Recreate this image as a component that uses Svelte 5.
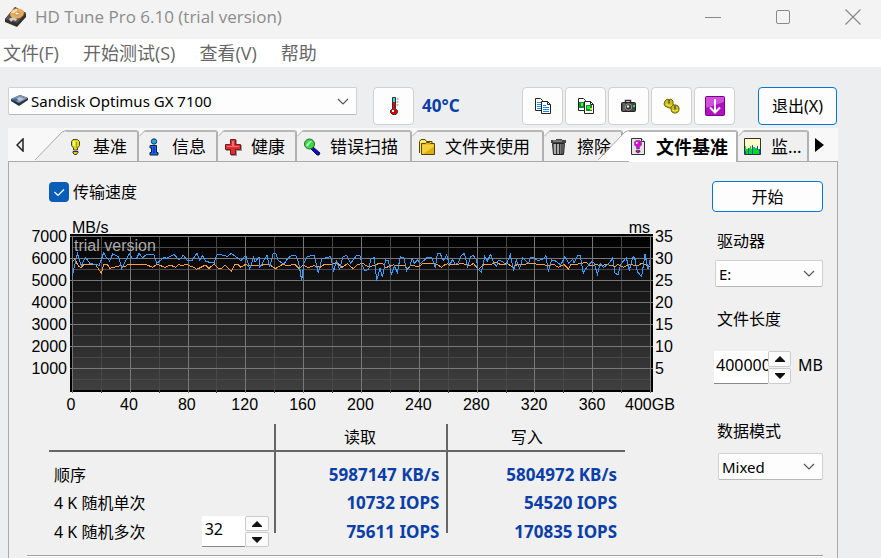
<script>
  const menus = ['文件(F)', '开始测试(S)', '查看(V)', '帮助'];
  const tools = ['copy', 'copyImage', 'camera', 'options', 'save'];
  const toolNames = {
    copy: '复制文本', copyImage: '复制图像', camera: '截图', options: '选项', save: '保存'
  };
  const tabs = [
    { label: '基准', icon: 'bulb', slope: true },
    { label: '信息', icon: 'info' },
    { label: '健康', icon: 'health' },
    { label: '错误扫描', icon: 'scan', wide: true },
    { label: '文件夹使用', icon: 'folder', wide: true },
    { label: '擦除', icon: 'trash' },
    { label: '文件基准', icon: 'fileBulb', slope: true, active: true },
    { label: '监...', icon: 'monitor', cut: true }
  ];
  const speeds = [7000, 6000, 5000, 4000, 3000, 2000, 1000];
  const times = [35, 30, 25, 20, 15, 10, 5];
  const sizes = ['0', '40', '80', '120', '160', '200', '240', '280', '320', '360', '400GB'];
  const rows = [
    { label: '顺序', read: '5987147 KB/s', write: '5804972 KB/s' },
    { label: '4 K 随机单次', read: '10732 IOPS', write: '54520 IOPS' },
    { label: '4 K 随机多次', read: '75611 IOPS', write: '170835 IOPS', threads: true }
  ];

  // grid lines, in plot pixels
  const xs = Array.from({ length: 21 }, (_, i) => ({ at: Math.floor(2.4 + i * 28.91) + 0.5, major: i % 2 === 0 }));
  const ys = Array.from({ length: 14 }, (_, i) => ({ at: 2.5 + i * 11, major: i % 2 === 0 }));

  // samples in thirds of a plot pixel
  const readLine =
    '7,125 22,58 34,96 46,70 52,78 60,88 88,94 101,56 107,68 119,81 128,60 146,68 155,103 178,59 187,73 200,73 207,58 218,71 231,60 252,62 260,88 282,71 291,73 312,61 327,78 340,64 353,81 365,81 381,57 389,78 398,65 407,83 432,86 442,60 472,67 484,58 513,80 527,64 539,105 551,70 555,85 567,69 570,100 591,63 599,100 609,60 617,58 625,80 642,90 655,71 667,64 679,66 685,83 689,103 695,139 702,88 712,68 732,63 745,117 755,75 782,68 791,113 799,80 809,106 818,70 830,63 842,88 ' +
    '860,64 870,65 876,93 885,110 896,106 903,75 913,71 920,140 930,103 937,130 947,78 955,80 964,121 973,96 982,115 991,68 1002,72 1010,110 1019,100 1026,71 1033,88 1043,78 1051,89 1072,70 1086,72 1096,103 1102,60 1110,58 1120,80 1130,63 1139,93 1148,76 1155,91 1165,86 1173,65 1183,58 1193,98 1201,68 1210,65 1220,78 1224,106 1234,115 1244,68 1252,81 1262,61 1272,88 1280,96 1285,78 1298,83 1308,93 1321,62 1331,110 1339,78 1349,103 1358,72 1376,88 1382,70 1392,72 1405,80 1423,73 1428,65 1435,113 1445,78 1457,81 1472,93 1485,68 1496,88 1508,76 1512,88 1523,64 1531,65 1540,118 1550,100 1565,83 1573,88 1582,121 1591,88 1600,100 1615,91 1628,72 1635,118 1644,122 1652,91 1669,71 1678,108 1689,68 1694,71 1702,113 1715,128 1725,61 1734,106 1740,78';
  const writeLine =
    '7,83 14,75 25,96 33,101 43,91 52,93 76,91 94,118 101,91 112,91 119,103 150,95 165,98 174,91 227,91 248,100 260,91 286,100 300,93 317,100 327,91 335,95 350,91 362,97 371,100 380,106 407,93 417,103 433,90 442,101 452,105 465,93 484,112 494,91 503,91 512,100 527,91 537,96 550,94 570,95 585,91 600,93 616,104 638,91 652,95 675,91 687,103 700,93 716,101 732,95 750,100 764,91 780,91 803,88 816,100 832,89 ' +
    '850,104 860,93 878,88 895,99 915,93 928,88 938,88 947,101 970,93 1005,95 1012,106 1022,93 1045,98 1060,88 1080,88 1100,91 1115,100 1123,93 1132,90 1165,91 1175,88 1200,95 1210,88 1218,98 1225,106 1240,93 1265,91 1278,85 1295,93 1310,88 1330,100 1340,93 1360,93 1375,88 1420,92 1433,95 1450,90 1465,100 1482,91 1495,105 1503,91 1520,91 1548,85 1558,93 1565,96 1580,90 1590,96 1610,91 1635,98 1643,91 1660,100 1678,91 1702,96 1715,88 1740,98';

  let showSpeed = $state(true);
  let length = $state('400000');
  let threads = $state(32);
</script>

{#snippet chevron()}
  <svg class="chev" width="12" height="7" viewBox="0 0 12 7" aria-hidden="true"><path d="M1 1l5 5 5-5" fill="none" stroke="#555" stroke-width="1.200" /></svg>
{/snippet}

{#snippet spin(up, down)}
  <span class="spin">
    <button type="button" aria-label="增加" onclick={up}><svg width="10" height="6" viewBox="0 0 10 6"><path d="M5 0l5 5v1H0V5z" fill="#111" /></svg></button>
    <button type="button" aria-label="减少" onclick={down}><svg width="10" height="6" viewBox="0 0 10 6"><path d="M5 6l5-5V0H0v1z" fill="#111" /></svg></button>
  </span>
{/snippet}

{#snippet icon(name)}
  <svg class="icon" width="18" height="18" viewBox="0 0 18 18" aria-hidden="true">
    {#if name === 'bulb'}
      <path d="M7 1.500h4.500l2 2v4l-2 2.500v2h-4V10L5.500 7.500v-4z" fill="#e2dc00" stroke="#444" />
      <path d="M7 3.500h2v4H7z" fill="#ffffa8" /><path d="M10.500 4v6" stroke="#a89c00" />
      <path d="M7 13.500h5v1.500l-1.500 1.500h-2L7 15z" fill="#d8d000" stroke="#333" /><path d="M10 15h2v1h-2z" fill="#d060c0" />
    {:else if name === 'info'}
      <circle cx="9" cy="3.500" r="2.700" fill="#18a8f0" stroke="#234" />
      <path d="M5 7.500h6.500v7H13V17H5v-2.500h1.500V10H5z" fill="#1468f0" stroke="#123" />
      <path d="M8 9h2v6H8z" fill="#1838e8" />
    {:else if name === 'health'}
      <path d="M7 2h6v5h5v6h-5v5H7v-5H2V7h5z" fill="#999" />
      <path d="M6.500 1.500h5v5h5v5h-5v5h-5v-5h-5v-5h5z" fill="#e02c2c" stroke="#6e2020" />
      <path d="M8 3h2v5h5v1H3V8h5z" fill="#f47070" />
    {:else if name === 'scan'}
      <path d="M10 9l7 6-1 2-2 0-6-6z" fill="#1010c0" stroke="#111150" />
      <circle cx="6.500" cy="6" r="5" fill="#38d848" stroke="#256a30" />
      <path d="M3 7l4-4h2L4 9z" fill="#b8ffc0" />
    {:else if name === 'folder'}
      <path d="M1.500 15V3.500l1.500-2h4l1.500 2H14V6" fill="#ffe968" stroke="#554500" />
      <path d="M3.500 16.500v-11h4l1-1h3l1 1h4v11z" fill="#e0ae10" stroke="#554500" />
      <path d="M4 6.500h12v2L5 16H4z" fill="#f4d040" />
    {:else if name === 'trash'}
      <path d="M1 2h5V1h6v1h4v3H1z" fill="#444" />
      <path d="M2.500 5.500h12l-1 11h-10z" fill="#777" stroke="#222" />
      <path d="M5 6v10M8 6v10" stroke="#ddd" /><path d="M6.500 6v10M9.500 6v10M12 6v10" stroke="#333" />
      <path d="M3 3h9" stroke="#aaa" />
    {:else if name === 'fileBulb'}
      <path d="M2.500.500h10l3 3v13h-13z" fill="#e4e4e4" stroke="#333" /><path d="M12.500.500v3h3" fill="#fff" stroke="#333" />
      <path d="M7 2.500h4L12.500 4v3L10.500 9v2h-3V9L5.500 7V4z" fill="#e000e0" stroke="#666" stroke-width=".7" />
      <path d="M7 4h1.500v2H7z" fill="#fff" /><path d="M7 12.500h4v1L9.500 15h-1L7 13.500z" fill="#c000c0" stroke="#333" stroke-width=".6" />
    {:else if name === 'monitor'}
      <path d="M.5.500h16v16H.5z" fill="#fffbc8" stroke="#333" />
      <path d="M1 16V8h1v3h2v-1h2V8h1v3h1V7h1v2h2v1h2V8h1v3h2v5z" fill="#00dc10" />
      <path d="M1 13h1v3H1zM4 10h1v6H4zM8 7h1v9H8zM13 8h1v4h-1zM15 11h1v5h-1z" fill="#1848e8" />
    {:else if name === 'thermo'}
      <path d="M7.500 12V.500h3V12l2 1.500v2L11 17.500H7.500l-2-2v-2z" fill="#e00000" stroke="#333" />
      <path d="M8 1h2v4H8z" fill="#30d8e0" /><path d="M7 13h2v2H7z" fill="#fff" /><path d="M11.500 2h2M11.500 5h2M11.500 8h2" stroke="#777" />
    {:else if name === 'copy'}
      <path d="M1.500 1.500h5l2 2v10h-7z" fill="#fff" stroke="#222" />
      <path d="M3 5.500h4M3 7.500h4M3 9.500h4M3 11.500h4" stroke="#1890f0" />
      <path d="M7.500 4.500h6l3 3v9h-9z" fill="#fff" stroke="#222" /><path d="M13.500 4.500v3h3" fill="none" stroke="#222" />
      <path d="M9 8.500h3M9 10.500h6M9 12.500h6M9 14.500h6" stroke="#1880f0" />
    {:else if name === 'copyImage'}
      <path d="M1.500 1.500h5l2 2v10h-7z" fill="#fff" stroke="#222" /><path d="M2 5h6v6H2z" fill="#148c30" /><path d="M4 6h2v3H4z" fill="#40ff40" />
      <path d="M7.500 4.500h6l3 3v9h-9z" fill="#fff" stroke="#222" /><path d="M13.500 4.500v3h3" fill="none" stroke="#222" />
      <path d="M9 8h6v6H9z" fill="#148c30" /><path d="M10 9h3v3h-3z" fill="#30f030" /><path d="M13 11h2v2h-2z" fill="#e0e020" />
    {:else if name === 'camera'}
      <path d="M5.500 6V3.500h5V6" fill="none" stroke="#333" stroke-width="1.500" />
      <rect x="1.500" y="5.500" width="14" height="9" rx="1" fill="#444" stroke="#222" />
      <circle cx="8.500" cy="10" r="3.200" fill="#333" stroke="#999" /><circle cx="8" cy="9.500" r="1.200" fill="#eee" />
      <path d="M13 8h2v2h-2z" fill="#20e040" /><path d="M4 6v8" stroke="#888" />
    {:else if name === 'options'}
      <path d="M2 4l2-2 2 1 2-1 2 2v3l1 2-2 2H6L4 10 2 9 1 7z" fill="#cabe14" stroke="#6e6400" />
      <path d="M8 10l2-2h3l2 1 1 2v2l-1 2-2 1h-2l-2-1-1-2z" fill="#cabe14" stroke="#6e6400" />
      <path d="M3 7l4 2 2-1M9 13l3 1 3-1" fill="none" stroke="#f2e858" /><path d="M6 2.500v4M12 8.500v4" stroke="#555" stroke-width="1.500" />
    {/if}
  </svg>
{/snippet}

<div class="app">
  <header class="title">
    <svg width="23" height="20" viewBox="0 0 23 20" aria-hidden="true">
      <path d="M1 12L11 0l11 6v4l-9 10L1 15z" fill="#33302e" />
      <path d="M1 12L11 0l11 6-9 10z" fill="#5b5552" />
      <ellipse cx="13" cy="6.500" rx="7" ry="5" fill="#e8ac58" transform="rotate(-12 13 6.500)" />
      <path d="M7 6q2-4 6-4l0 4z" fill="#ffdc98" />
      <ellipse cx="13" cy="6.500" rx="2.200" ry="1.500" fill="#eee" stroke="#8a6a40" stroke-width=".6" />
      <path d="M5 12l4-2 4 2-1 2-3-1-2 2z" fill="#ccc" />
    </svg>
    <h1>HD Tune Pro 6.10 (trial version)</h1>
    <div class="window-buttons">
      <button type="button" aria-label="最小化"><svg width="16" height="16" viewBox="0 0 16 16"><path d="M0 8.500h16" stroke="#888" /></svg></button>
      <button type="button" aria-label="最大化"><svg width="16" height="16" viewBox="0 0 16 16"><rect x="1.500" y="1.500" width="13" height="13" rx="1.500" fill="none" stroke="#888" /></svg></button>
      <button type="button" aria-label="关闭"><svg width="16" height="16" viewBox="0 0 16 16"><path d="M.5.500l15 15M15.500.500l-15 15" stroke="#888" stroke-width="1.200" /></svg></button>
    </div>
  </header>

  <nav class="menu">
    {#each menus as m}<button type="button">{m}</button>{/each}
  </nav>

  <div class="toolbar">
    <div class="combo drive">
      <svg class="disk" width="17" height="12" viewBox="0 0 17 12" aria-hidden="true">
        <path d="M0 4L9 0l8 3v2L8 11 0 6z" fill="#26323e" /><path d="M0 4L9 0l8 3-9 5z" fill="#8094a8" /><path d="M5 4l4-2 4 2-4 2z" fill="#b4c8dc" /><path d="M1 5l4-2 2 2-2 1z" fill="#2c66b8" />
      </svg>
      <select aria-label="磁盘"><option>Sandisk Optimus GX 7100</option></select>
      {@render chevron()}
    </div>
    <button type="button" class="tool temp" aria-label="温度">{@render icon('thermo')}</button>
    <span class="degrees">40°C</span>
    <div class="tools">
      {#each tools as t}
        <button type="button" class="tool" aria-label={toolNames[t]}>
          {#if t === 'save'}
            <svg width="20" height="20" viewBox="0 0 20 20" aria-hidden="true"><rect x=".5" y=".5" width="19" height="19" rx="1" fill="#b010c0" stroke="#780088" /><path d="M1 1h18v5L1 12z" fill="#d050dc" /><path d="M10 3v13M5 11.500l5 5 5-5" fill="none" stroke="#fff" stroke-width="2" /></svg>
          {:else}{@render icon(t)}{/if}
        </button>
      {/each}
    </div>
    <button type="button" class="exit">退出(X)</button>
  </div>

  <div class="tabs" role="tablist">
    <button type="button" class="scroll" aria-label="向左"><svg width="8" height="14" viewBox="0 0 8 14"><path d="M7 1v12L1 7z" fill="#eee" stroke="#222" stroke-width="1.500" /></svg></button>
    {#each tabs as t}
      <button type="button" role="tab" aria-selected={!!t.active} class="tab" class:active={t.active} class:sloped={t.slope} class:wide={t.wide} class:cut={t.cut}>
        {#if t.slope}
          <svg class="slope" width="31" height="33" viewBox="0 0 31 33" aria-hidden="true"><path d="M0 33L28 3l3-1v31z" fill={t.active ? '#fff' : '#f0f0f0'} /><path d="M0 32L27 4l4-1.500" fill="none" stroke="#aaa" /></svg>
        {/if}
        <span class="face">
          {#if !t.slope}<svg class="corner" width="7" height="7" viewBox="0 0 7 7" aria-hidden="true"><path d="M0 0h7L0 7z" fill="#f8f8f8" /><path d="M0 6.500L6.500 0" stroke="#aaa" /></svg>{/if}
          {@render icon(t.icon)}<span>{t.label}</span>
        </span>
      </button>
    {/each}
    <button type="button" class="scroll" aria-label="向右"><svg width="9" height="14" viewBox="0 0 9 14"><path d="M0 0v14l9-7z" fill="#000" /></svg></button>
  </div>

  <main class="panel">
    <div class="columns">
      <section class="results">
        <label class="check">
          <input type="checkbox" bind:checked={showSpeed} />
          <svg width="20" height="20" viewBox="0 0 20 20" aria-hidden="true"><rect width="20" height="20" rx="4" fill="#0a5eb8" /><path d="M5.500 10l3.500 3.500 6-6" fill="none" stroke="#fff" stroke-width="1.200" /></svg>
          <span>传输速度</span>
        </label>

        <div class="chart">
          <div class="axis left">{#each speeds as s}<span>{s}</span>{/each}</div>
          <div class="middle">
            <div class="units"><span>MB/s</span><span>ms</span></div>
            <div class="plot">
              <svg viewBox="0 0 583 159" preserveAspectRatio="none" aria-hidden="true">
                <defs><linearGradient id="fade" x1="0" y1="0" x2="0" y2="1"><stop offset="0" stop-color="#000" /><stop offset="1" stop-color="#404040" /></linearGradient></defs>
                <rect width="583" height="158" fill="#000" />
                <rect x="2" y="2" width="579" height="154" fill="url(#fade)" />
                {#each xs.filter((l) => !l.major) as l}<path d="M{l.at} 2V159" stroke="#484848" />{/each}
                {#each ys.filter((l) => !l.major) as l}<path d="M2 {l.at}H581" stroke="#484848" />{/each}
                {#each xs.filter((l) => l.major) as l}<path d="M{l.at} 2V159" stroke="#787878" />{/each}
                {#each ys.filter((l) => l.major) as l}<path d="M0 {l.at}H583" stroke="#787878" />{/each}
                {#if showSpeed}
                  <g transform="scale(.33333)" fill="none" stroke-width="1" shape-rendering="crispEdges">
                    <polyline points={writeLine} stroke="#ff9c3c" vector-effect="non-scaling-stroke" />
                    <polyline points={readLine} stroke="#3c9cff" vector-effect="non-scaling-stroke" />
                  </g>
                {/if}
              </svg>
              <span class="trial">trial version</span>
            </div>
            <div class="sizes">{#each sizes as s}<span>{s}</span>{/each}</div>
          </div>
          <div class="axis right">{#each times as t}<span>{t}</span>{/each}</div>
        </div>

        <table>
          <colgroup><col class="c1" /><col class="c2" /><col class="c3" /></colgroup>
          <thead><tr><th aria-label="测试"></th><th>读取</th><th>写入</th></tr></thead>
          <tbody>
            {#each rows as r}
              <tr>
                <th scope="row">
                  <div class="row-head">
                    <span>{r.label}</span>
                    {#if r.threads}
                      <span class="number small">
                        <input aria-label={r.label} bind:value={threads} />
                        {@render spin(() => threads++, () => threads--)}
                      </span>
                    {/if}
                  </div>
                </th>
                <td>{r.read}</td><td>{r.write}</td>
              </tr>
            {/each}
          </tbody>
        </table>
      </section>

      <aside class="side">
        <button type="button" class="start">开始</button>
        <label for="drive">驱动器</label>
        <div class="combo"><select id="drive"><option>E:</option></select>{@render chevron()}</div>
        <label for="length" class="l2">文件长度</label>
        <div class="number">
          <input id="length" bind:value={length} />
          {@render spin(() => (length = String(+length + 1)), () => (length = String(+length - 1)))}
          <span class="mb">MB</span>
        </div>
        <label for="mode" class="l3">数据模式</label>
        <div class="combo mode"><select id="mode"><option>Mixed</option></select>{@render chevron()}</div>
      </aside>
    </div>
    <hr />
  </main>
</div>

<style>
  :global(body) { background: #edeef0; }
  .app {
    min-height: 100vh; display: flex; flex-direction: column; overflow: hidden;
    box-sizing: border-box; background: #edeef0; color: #000;
    font: 16px/20px "Noto Sans", "Noto Sans CJK SC", sans-serif;
  }
  .app :global(*) { box-sizing: border-box; }
  button, input, select { font: inherit; color: inherit; margin: 0; padding: 0; border: 0; background: none; }
  svg { display: block; flex: none; }

  .title { display: flex; align-items: center; height: 39px; padding: 0 0 6px 4px; background: #f3f3f3; color: #8c8c8c; }
  h1 { flex: 1; margin: 0 0 0 8px; font: 400 17px/24px "Open Sans", sans-serif; white-space: nowrap; }
  .window-buttons { display: flex; gap: 14px; }
  .window-buttons button { width: 56px; height: 32px; display: grid; place-items: center; }

  .menu { display: flex; gap: 24px; height: 28px; padding: 0 3px; background: #fff; color: #666; font: 18px/28px "Open Sans", "Noto Sans CJK SC", sans-serif; }

  .toolbar { display: flex; align-items: flex-start; height: 61px; padding: 20px 44px 0 8px; }
  .combo { position: relative; display: flex; align-items: center; height: 27px; background: #fdfdfd; border: 1px solid #d0d0d0; border-bottom-color: #b8b8b8; border-radius: 2px; }
  .combo select { flex: 1; min-width: 0; height: 100%; padding-left: 3px; appearance: none; outline: 0; font-size: 15px; }
  .combo .chev { position: absolute; right: 7px; pointer-events: none; }
  .drive { flex: 1; height: 28px; }
  .disk { margin-left: 2px; }
  .tool { width: 41px; height: 38px; display: grid; place-items: center; background: #fdfdfd; border: 1px solid #d0d0d0; border-radius: 4px; }
  .temp { margin-left: 16px; }
  .degrees { width: 100px; padding-left: 8px; font-size: 17px; font-weight: bold; line-height: 37px; color: #0a3ea8; }
  .tools { display: flex; gap: 2px; margin-left: 8px; }
  .exit, .start { background: #fdfdfd; border: 1px solid #0078d4; border-radius: 4px; }
  .exit { width: 79px; height: 38px; margin-left: 23px; }

  .tabs { display: flex; height: 33px; margin: 0 43px 0 8px; background: #f8f8f8; font-size: 17px; }
  .scroll { width: 27px; padding-right: 3px; display: grid; place-items: center; }
  .tab { display: flex; white-space: nowrap; }
  .face { position: relative; display: flex; align-items: center; gap: 9px; height: 31px; margin-top: 2px; padding: 0 10px 0 6px; background: #f0f0f0; border-top: 2px solid #b8b8b8; border-right: 2px solid #b0b0b0; border-top-right-radius: 3px; }
  .sloped .face { padding-left: 0; }
  .wide .face { padding-right: 12px; }
  .cut .face { padding-right: 5px; }
  .corner { position: absolute; left: 0; top: -2px; }
  .active { position: relative; margin-left: -25px; font-weight: bold; font-size: 18px; }
  .active .face { height: 32px; padding-right: 8px; background: #fff; }
  .tabs .scroll:last-child { width: 24px; }

  .panel { flex: 1; margin: 0 43px 0 8px; background: #f0f0f0; border: 1px solid #aaa; border-bottom: 0; }
  .columns { display: flex; align-items: flex-start; }
  .results { flex: 1; min-width: 0; padding-top: 20px; }
  .check { display: flex; align-items: center; gap: 4px; width: max-content; margin-left: 40px; position: relative; }
  .check input { position: absolute; width: 20px; height: 20px; opacity: 0; }

  .chart { display: flex; margin-top: 16px; font: 16px/22px "Liberation Sans", sans-serif; }
  .axis { display: flex; flex-direction: column; padding-top: 8px; }
  .left { width: 58px; margin-right: 3px; text-align: right; }
  .right { width: 20px; margin-left: 2px; }
  .middle { flex: 1; min-width: 0; }
  .units { display: flex; justify-content: space-between; height: 16px; padding: 0 3px 0 2px; line-height: 20px; }
  .plot { position: relative; height: 159px; }
  .plot svg { width: 100%; height: 100%; }
  .trial { position: absolute; left: 4px; top: 2px; line-height: 20px; color: #aaa; }
  .sizes { display: flex; justify-content: space-between; padding: 3px 3px 0 1px; line-height: 18px; }
  .sizes span { display: flex; justify-content: center; width: 0; }

  table { width: calc(100% - 90px); margin: 10px 50px 0 40px; table-layout: fixed; border-collapse: separate; border-spacing: 0; }
  .c1 { width: 39%; }
  .c2 { width: 30%; }
  .c3 { width: 31%; }
  th, td { padding: 0; font-weight: 400; }
  thead th { height: 28px; border-bottom: 2px solid #666; }
  thead th:last-child { padding-right: 18px; }
  tbody th { height: 28px; text-align: left; }
  td { padding-right: 7px; text-align: right; color: #0a3ea8; font-size: 17px; font-weight: bold; }
  td:last-child { padding-right: 8px; }
  th + th, td { background: linear-gradient(#666, #666) no-repeat left top / 2px 100%; }
  tbody tr:first-child > * { height: 37px; padding-top: 9px; }
  tbody tr:last-child > * { height: 29px; }
  tbody tr:last-child td { background-size: 2px 16px; }
  .row-head { display: flex; justify-content: space-between; align-items: center; height: 28px; padding: 0 5px; }

  .number { display: flex; height: 33px; }
  .number input { width: 54px; padding: 0 0 4px 2px; background: #fff; border-bottom: 1px solid #888; outline: 0; }
  .small { height: 31px; }
  .small input { width: 43px; padding-left: 3px; }
  .spin { display: flex; flex-direction: column; gap: 1px; width: 24px; }
  .spin button { flex: 1; display: grid; place-items: center; background: #fafafa; border: 1px solid #ccc; border-radius: 2px; }
  .mb { margin-left: 7px; line-height: 29px; }

  .side { display: flex; flex-direction: column; width: 111px; margin: 19px 14px 0 37px; }
  .side label { margin: 19px 0 9px 5px; }
  .side .l2 { margin: 22px 0; }
  .side .l2, .side .l3 { margin-left: 5px; }
  .side .l3 { margin-top: 37px; margin-bottom: 12px; }
  .side .combo { margin-left: 3px; }
  .side .mode { margin-left: 6px; }
  .side .number { margin-left: 2px; }
  .start { height: 31px; }
  hr { height: 2px; margin: 9px 14px 0 18px; border: 0; background: #fff; border-top: 1px solid #a0a0a0; }
</style>
